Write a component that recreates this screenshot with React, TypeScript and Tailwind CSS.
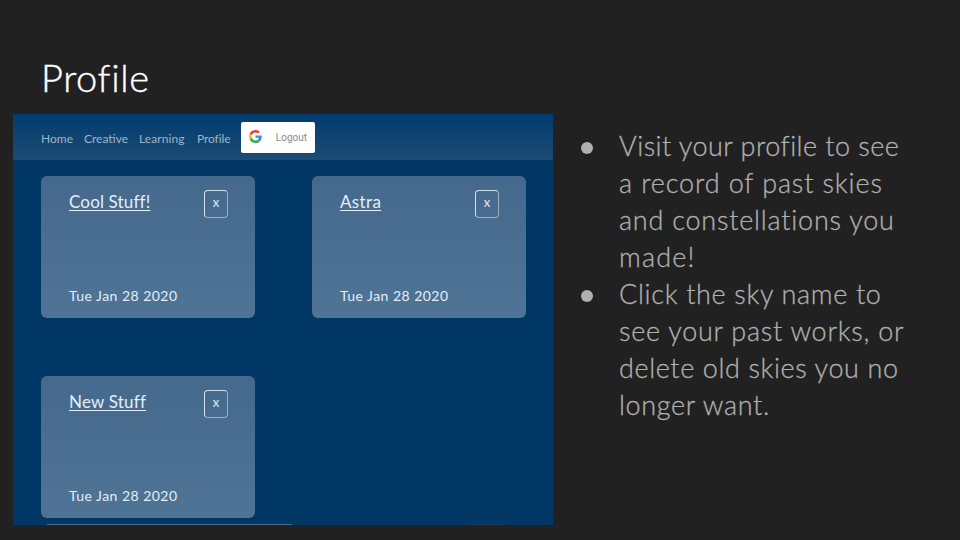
const bullets = [
  [
    { text: "Visit your profile to see", track: "tracking-[0.46px]" },
    { text: "a record of past skies", track: "tracking-[0.87px]" },
    { text: "and constellations you", track: "tracking-[0.78px]" },
    { text: "made!", track: "tracking-[1.2px]" },
  ],
  [
    { text: "Click the sky name to", track: "tracking-[0.67px]" },
    { text: "see your past works, or", track: "tracking-[0.73px]" },
    { text: "delete old skies you no", track: "tracking-[0.6px]" },
    { text: "longer want.", track: "tracking-[0.65px]" },
  ],
];

const skies = [
  { name: "Cool Stuff!", track: "tracking-[0.15px]" },
  { name: "Astra", track: "tracking-[0.35px]" },
  { name: "New Stuff", track: "tracking-[0.2px]" },
];

function GoogleLogo() {
  return (
    <svg viewBox="0 0 48 48" className="h-[13px] w-[13px] shrink-0">
      <path fill="#EA4335" d="M24 9.5c3.54 0 6.71 1.22 9.21 3.6l6.85-6.85C35.9 2.38 30.47 0 24 0 14.62 0 6.51 5.38 2.56 13.22l7.98 6.19C12.43 13.72 17.74 9.5 24 9.5z" />
      <path fill="#4285F4" d="M46.98 24.55c0-1.57-.15-3.09-.38-4.55H24v9.02h12.94c-.58 2.96-2.26 5.48-4.78 7.18l7.73 6c4.51-4.18 7.09-10.36 7.09-17.65z" />
      <path fill="#FBBC05" d="M10.53 28.59c-.48-1.45-.76-2.99-.76-4.59s.27-3.14.76-4.59l-7.98-6.19C.92 16.46 0 20.12 0 24c0 3.88.92 7.54 2.56 10.78l7.97-6.19z" />
      <path fill="#34A853" d="M24 48c6.48 0 11.93-2.13 15.89-5.81l-7.73-6c-2.15 1.45-4.92 2.3-8.16 2.3-6.26 0-11.57-4.22-13.47-9.91l-7.98 6.19C6.51 42.62 14.62 48 24 48z" />
    </svg>
  );
}

function SkyCard({ name, track }: { name: string; track: string }) {
  return (
    <article className="flex h-[142px] flex-col justify-between rounded-[6px] bg-linear-to-b from-[#45698c] to-[#507495] pt-[14px] pr-[27px] pb-[13px] pl-7 text-[#e2eefb]">
      <div className="flex items-start justify-between">
        <a className={`mt-[1px] text-[17px] leading-[22px] whitespace-nowrap underline decoration-1 underline-offset-[2px] ${track}`}>{name}</a>
        <button className="flex h-7 w-6 items-center justify-center rounded-[4px] border-[1.5px] border-t-[#d5e0eb] border-r-[#a5adb5] border-b-[#a5adb5] border-l-[#d5e0eb] pb-[2px] text-[13px]">x</button>
      </div>
      <time className="text-[14px] leading-[18px] tracking-[0.47px] whitespace-nowrap">Tue Jan 28 2020</time>
    </article>
  );
}

export default function App() {
  return (
    <main className="h-[540px] w-[960px] overflow-hidden bg-[#212121] font-['Lato',sans-serif]">
      <h1 className="h-[114px] pt-[54px] pl-[41px] text-[38px] leading-[46px] font-light tracking-[0.6px] text-white [-webkit-text-stroke:0.4px]">Profile</h1>
      <div className="flex">
        <section className="ml-[13px] h-[411px] w-[540px] shrink-0 overflow-hidden bg-[#003765]">
          <nav className="flex h-[46px] items-center bg-linear-to-b from-[#003c6e] to-[#1c4b74] pl-7 text-[12px] text-[#9fb5ca]">
            <a className="mt-[3px] w-[43px]">Home</a>
            <a className="mt-[3px] w-[55px]">Creative</a>
            <a className="mt-[3px] w-[58px] tracking-[0.1px]">Learning</a>
            <a className="mt-[3px] w-[44px] tracking-[-0.1px]">Profile</a>
            <button className="flex h-[31px] w-[74px] items-center justify-between rounded-[2px] bg-white pr-2 pb-[2px] pl-2 font-['Roboto',sans-serif] text-[10px] text-[#8b8b8b]">
              <GoogleLogo />
              <span className="mt-[2px]">Logout</span>
            </button>
          </nav>
          <div className="mt-4 ml-7 grid grid-cols-[214px_214px] gap-x-[57px] gap-y-[58px]">
            {skies.map((sky) => (
              <SkyCard key={sky.name} name={sky.name} track={sky.track} />
            ))}
          </div>
          <div className="mt-[6px] ml-[34px] flex h-[2px] justify-between pr-[50px]">
            <span className="w-[245px] bg-[#4b6b87]" />
            <span className="w-[33px] bg-[#1d3d59]" />
          </div>
        </section>
        <ul className="mt-[13px] ml-[28px] text-[27px] leading-[37px] font-light text-[#b0b0b0] [-webkit-text-stroke:0.3px]">
          {bullets.map((lines) => (
            <li key={lines[0].text} className="flex">
              <span className="mt-[15px] mr-[26px] h-3 w-3 shrink-0 rounded-full bg-[#b0b0b0]" />
              <p>
                {lines.map((line) => (
                  <span key={line.text} className={`block whitespace-nowrap ${line.track}`}>{line.text}</span>
                ))}
              </p>
            </li>
          ))}
        </ul>
      </div>
    </main>
  );
}
